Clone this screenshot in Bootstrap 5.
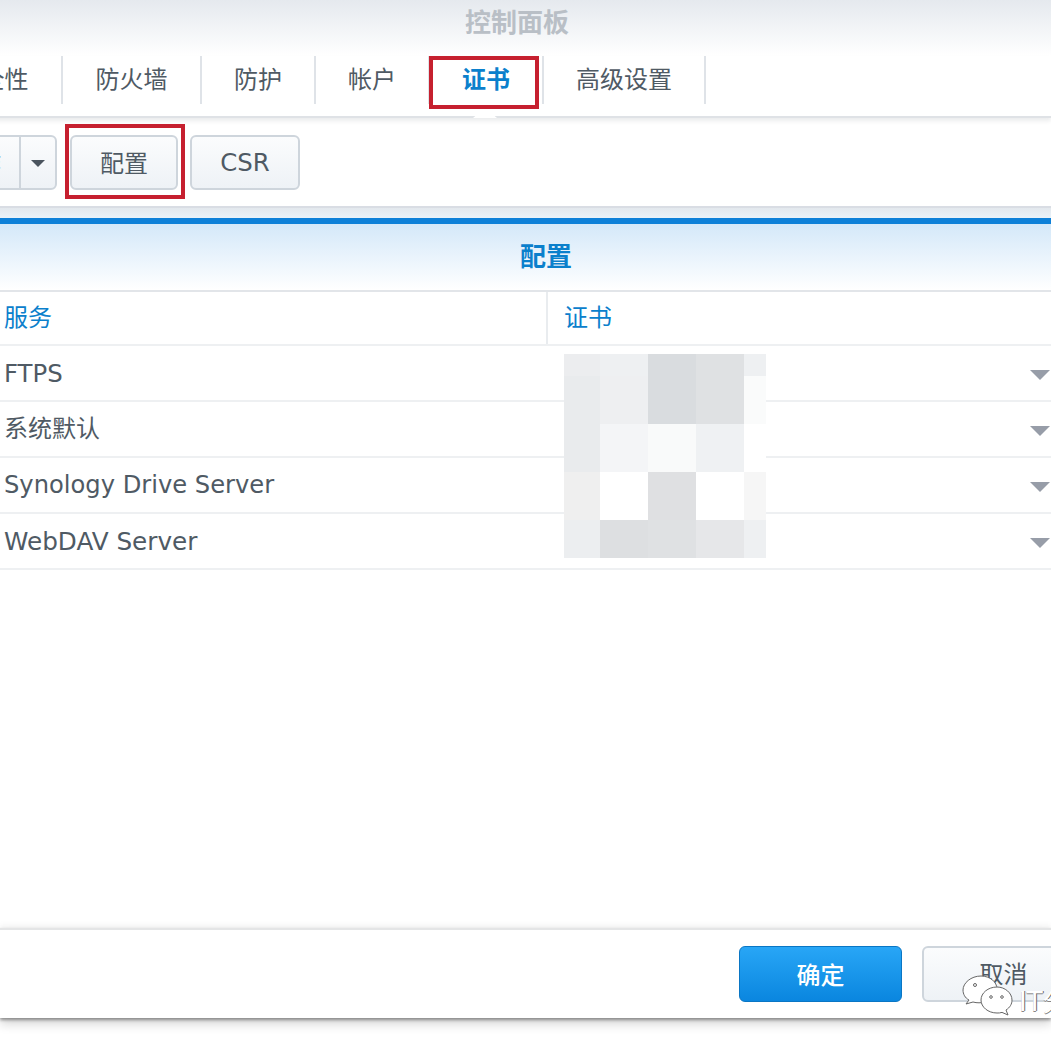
<!DOCTYPE html>
<html lang="zh">
<head>
<meta charset="utf-8">
<title>控制面板</title>
<link href="https://cdn.jsdelivr.net/npm/bootstrap@5.3.0/dist/css/bootstrap.min.css" rel="stylesheet">
<style>
html,body{height:1052px;overflow:hidden;background:#fff}
body{font-family:"DejaVu Sans","Noto Sans CJK SC",sans-serif;font-size:24px;color:#4f5a64;line-height:1.2;width:1051px;position:relative}
.title-bar{height:56px;background:linear-gradient(#e5e9ee,#fff);color:#b9bfc6;font-weight:700;font-size:26px;padding-bottom:9px}
.title-bar span{margin-left:-17px}
.tab-bar{height:62px;margin-left:-76px;padding-bottom:14px;border-bottom:2px solid #dfe2e6;box-shadow:0 3px 4px rgba(60,70,80,.1);position:relative}
.tab-item{height:48px;border-right:2px solid #dfe3e8;width:139px;flex:none}
.tab-narrow{width:114px}
.tab-wide{width:162px}
.tab-on{color:#0b80cc;font-weight:700}
.tab-notch{position:absolute;left:549px;bottom:-2px;width:24px;height:10px;background:#fff;clip-path:polygon(0 100%,50% 0,100% 100%)}
.red-mark{position:absolute;border:4px solid #c6202f;pointer-events:none}
.mark-tab{left:429px;top:56px;width:110px;height:53px}
.mark-btn{left:65px;top:124px;width:120px;height:75px}
.tool-bar{height:88px;margin-left:-60px;gap:13px}
.syn-btn{height:55px;border:2px solid #ced5dc;border-radius:6px;background:linear-gradient(#fbfcfd,#eef2f6);color:#4f5a64;font-size:24px;padding:3px 0 0}
.split-main{width:79px;border-radius:6px 0 0 6px;border-right:0;flex:none;text-align:right;padding-right:18px}
.split-caret{width:38px;border-radius:0 6px 6px 0;flex:none;padding:0}
.btn-conf{width:108px;flex:none}
.btn-csr{width:110px;flex:none;margin-left:-1px}
.latin-txt{font-size:24.4px}
.latin-syno{font-size:24.2px}
.latin-dav{font-size:24.7px}
.caret-small{width:0;height:0;border-left:7px solid transparent;border-right:7px solid transparent;border-top:7px solid #4a545e;display:block;margin:3px auto 0}
.gutter{height:12px;border-top:2px solid #d9dde4;background:linear-gradient(#e3e8ed,#e9f2f9)}
.blue-rule{height:6px;background:#0d80d8}
.panel-head{height:66px;background:linear-gradient(#d4e8f9,#fff);color:#0b80cc;font-weight:700;font-size:26px;padding-left:41px;padding-top:2px}
.grid-row{height:56px;border-top:2px solid #eef0f2;padding-top:1px}
.grid-head{height:54px;border-top:2px solid #e2e5e9;color:#0b80cc}
.col-svc{width:546px;padding-left:4px;flex:none}
.col-cert{padding-left:16px;border-left:2px solid #e9ecef;align-self:stretch}
.grid-end{border-top:2px solid #eef0f2}
.row-caret{position:absolute;right:1px;width:0;height:0;border-left:10px solid transparent;border-right:10px solid transparent;border-top:10px solid #979da8}
.c1{top:370px}.c2{top:426px}.c3{top:482px}.c4{top:538px}
.mosaic{position:absolute;left:564px;top:354px;display:grid;grid-template-columns:36px 48px 48px 48px 22px;grid-template-rows:22px 48px 48px 48px 38px}
.mosaic i{display:block}
.foot-bar{position:absolute;left:0;right:0;top:928px;height:90px;background:#fff;border-top:2px solid #e4e5e6;box-shadow:0 -4px 5px rgba(0,0,0,.03),0 2px 3px rgba(0,0,0,.38),0 6px 10px rgba(0,0,0,.16);padding-top:16px;padding-left:739px;gap:20px}
.btn-ok{width:163px;height:56px;border:1px solid #0a76c4;border-radius:6px;background:linear-gradient(#28a6f6,#0a86df);color:#fff;font-size:24px;padding:4px 0 0;flex:none;font-weight:500}
.btn-cancel{width:163px;height:56px;flex:none;padding:2px 0 0}
.wm{position:absolute;left:961px;top:975px;gap:2px}
.wm-text{font-size:26px;color:#fff;text-shadow:1px 0 0 #666,0 1px 0 #888;margin-left:2px;margin-top:12px;line-height:1;white-space:nowrap}
</style>
</head>
<body>
<header class="title-bar d-flex align-items-center justify-content-center"><span>控制面板</span></header>
<nav class="tab-bar d-flex">
  <div class="tab-item d-flex align-items-center justify-content-center">安全性</div>
  <div class="tab-item d-flex align-items-center justify-content-center">防火墙</div>
  <div class="tab-item tab-narrow d-flex align-items-center justify-content-center">防护</div>
  <div class="tab-item tab-narrow d-flex align-items-center justify-content-center">帐户</div>
  <div class="tab-item tab-narrow tab-on d-flex align-items-center justify-content-center">证书</div>
  <div class="tab-item tab-wide d-flex align-items-center justify-content-center">高级设置</div>
  <div class="tab-notch"></div>
</nav>
<section class="tool-bar d-flex align-items-center">
  <div class="d-flex">
    <button class="btn syn-btn split-main">操作</button>
    <button class="btn syn-btn split-caret" aria-label="更多"><span class="caret-small"></span></button>
  </div>
  <button class="btn syn-btn btn-conf">配置</button>
  <button class="btn syn-btn btn-csr latin-txt">CSR</button>
</section>
<div class="gutter"></div>
<div class="blue-rule"></div>
<div class="panel-head d-flex align-items-center justify-content-center">配置</div>
<div class="grid-head d-flex align-items-center"><div class="col-svc">服务</div><div class="col-cert d-flex align-items-center">证书</div></div>
<div class="grid-row d-flex align-items-center"><div class="col-svc latin-txt">FTPS</div></div>
<div class="grid-row d-flex align-items-center"><div class="col-svc">系统默认</div></div>
<div class="grid-row d-flex align-items-center"><div class="col-svc latin-syno">Synology Drive Server</div></div>
<div class="grid-row d-flex align-items-center"><div class="col-svc latin-dav">WebDAV Server</div></div>
<div class="grid-end"></div>
<span class="row-caret c1"></span><span class="row-caret c2"></span><span class="row-caret c3"></span><span class="row-caret c4"></span>
<div class="mosaic" aria-hidden="true" id="mz"></div>
<footer class="foot-bar d-flex">
  <button class="btn btn-ok">确定</button>
  <button class="btn syn-btn btn-cancel">取消</button>
</footer>
<div class="red-mark mark-tab"></div>
<div class="red-mark mark-btn"></div>
<div class="wm d-flex align-items-center">
  <svg width="54" height="42" viewBox="0 0 54 42" fill="#fff" stroke="#666" stroke-width="1">
    <path d="M20 1C10 1 2 8 2 15c0 4 2 8 6 10l-3 4 7-2c2 .6 4 .8 6 .8C28 28 36 22 36 14 36 7 29 1 20 1z"/>
    <path d="M36 12c-9 0-16 6-16 13s7 13 16 13c2 0 3 0 5-.6l6 2.600-2-5c4-2.500 6-6 6-10 0-7-7-13-15-13z"/>
    <circle cx="14" cy="10" r="1.500"/><circle cx="30" cy="22" r="1.300"/><circle cx="41" cy="22" r="1.300"/>
  </svg>
  <span class="wm-text">IT分</span>
</div>
<script>
var cols=['#ecedef','#eef0f2','#d9dcdf','#dfe1e3','#eef0f2',
'#e9ebed','#eeeff1','#d9dcdf','#dfe1e3','#fafbfb',
'#e9ebed','#f4f5f7','#f9fafa','#eff1f3','#ffffff',
'#efefef','#ffffff','#dfe0e2','#ffffff','#f6f6f6',
'#eceef0','#dddfe1','#dfe1e3','#e6e7e9','#eef0f2'];
var m=document.getElementById('mz');
cols.forEach(function(c){var i=document.createElement('i');i.style.background=c;m.appendChild(i);});
</script>
</body>
</html>
